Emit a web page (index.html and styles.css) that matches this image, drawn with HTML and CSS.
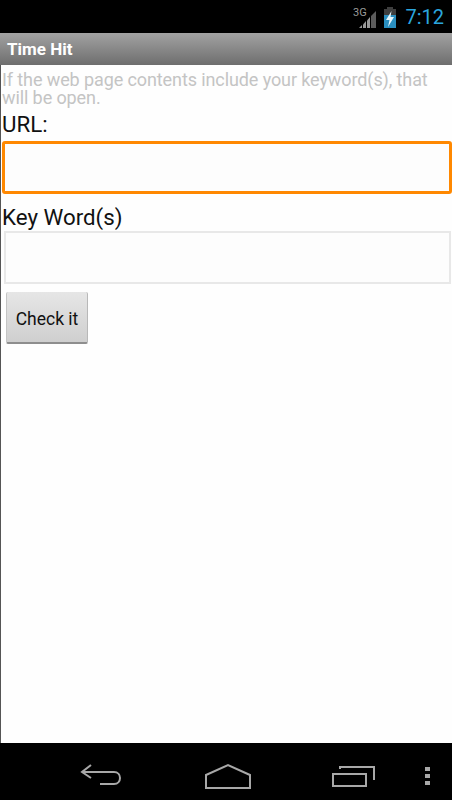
FILE: index.html
```html
<!DOCTYPE html>
<html lang="en">
<head>
<meta charset="UTF-8">
<title>Time Hit</title>
<link rel="stylesheet" href="styles.css">
</head>
<body>
<div class="status-bar">
  <svg class="signal" width="24" height="24" viewBox="0 0 24 24">
    <text x="0" y="11" class="net">3G</text>
    <path d="M6 23h3v-3H9z" fill="#9a9a9a"/>
    <path d="M10 23h3v-7l-3 3.500z" fill="#9a9a9a"/>
    <path d="M14 23h3V12l-3 3.500z" fill="#9a9a9a"/>
    <path d="M18 23h5V6l-5 5z" fill="#5c5c5c"/>
  </svg>
  <svg class="battery" width="14" height="24" viewBox="0 0 14 24">
    <path d="M4 2h6v2h3v7H1V4h3z" fill="#3f3f3f"/>
    <path d="M1 10h12v13H1z" fill="#2a8fc0"/>
    <path d="M8.500 6L3 15h3.500L5 22l6-10H7.500z" fill="#e6f6fc"/>
  </svg>
  <span class="clock">7:12</span>
</div>
<div class="title-bar">Time Hit</div>
<div class="content">
  <p class="hint">If the web page contents include your keyword(s), that will be open.</p>
  <label class="field-label url-label" for="url">URL:</label>
  <input class="url-input" type="text" id="url">
  <label class="field-label key-label" for="keys">Key Word(s)</label>
  <input class="key-input" type="text" id="keys">
  <button class="check-btn">Check it</button>
</div>
<div class="nav-bar">
  <svg class="nav-back" width="44" height="24" viewBox="0 0 44 24" fill="none" stroke="#a8a8a8" stroke-width="2">
    <path d="M11 2L2 9l9 6"/>
    <path d="M2 9h32c8 0 8 12 0 12H20"/>
  </svg>
  <svg class="nav-home" width="48" height="26" viewBox="0 0 48 26" fill="none" stroke="#a8a8a8" stroke-width="2">
    <path d="M2 12L24 2l22 10v13H2z"/>
  </svg>
  <svg class="nav-recent" width="44" height="24" viewBox="0 0 44 24" fill="none" stroke="#a8a8a8" stroke-width="2">
    <path d="M1 10h33v12H1z"/>
    <path d="M8 5V3h34v13"/>
  </svg>
  <div class="nav-menu"><i></i><i></i><i></i></div>
</div>
</body>
</html>
```

FILE: styles.css
```css
body {
  margin: 0;
  width: 452px;
  height: 800px;
  display: flex;
  flex-direction: column;
  overflow: hidden;
  font-family: Roboto, "Liberation Sans", sans-serif;
  background-color: #fefefe;
}

.status-bar {
  height: 33px;
  background-color: #000;
  display: flex;
  align-items: center;
  justify-content: flex-end;
  padding-right: 8px;
  flex-shrink: 0;
}
.signal {
  margin-right: 6px;
}
.net {
  font-size: 11px;
  fill: #9a9a9a;
}
.battery {
  margin-right: 8px;
}
.clock {
  font-size: 20px;
  color: #2ba6de;
}

.title-bar {
  height: 32px;
  line-height: 32px;
  padding-left: 7px;
  background: linear-gradient(#a2a2a2, #6e6e6e);
  color: #fff;
  font-size: 17px;
  font-weight: bold;
  flex-shrink: 0;
}

.content {
  flex: 1;
  display: flex;
  flex-direction: column;
  align-items: flex-start;
  border-left: 1px solid #555;
  padding-top: 6px;
}
.hint {
  margin: 0 0 0 1px;
  font-size: 18px;
  letter-spacing: -0.1px;
  line-height: 18px;
  color: #c4c4c4;
}
.field-label {
  margin-left: 1px;
  font-size: 22.300px;
  line-height: 26px;
  color: #111;
}
.url-label {
  margin-top: 4px;
}
.url-input {
  box-sizing: border-box;
  width: 450px;
  height: 53px;
  margin: 4px 0 0 1px;
  background-color: #fdfdfd;
  border: 3px solid #ff8800;
  border-radius: 3px;
  outline: none;
}
.key-label {
  margin-top: 10px;
}
.key-input {
  box-sizing: border-box;
  width: 447px;
  height: 53px;
  margin: 1px 0 0 3px;
  background-color: #fdfdfd;
  border: 2px solid #e8e8e8;
  border-radius: 0;
  outline: none;
}
.check-btn {
  width: 82px;
  height: 52px;
  margin: 8px 0 0 5px;
  padding: 3px 0 0;
  background: linear-gradient(#e6e6e6, #cfcfcf);
  border: none;
  border-bottom: 2px solid #8e8e8e;
  border-left: 1px solid #c4c4c4;
  border-right: 1px solid #b8b8b8;
  border-radius: 2px;
  font-family: Roboto, sans-serif;
  font-size: 17.500px;
  color: #111;
}

.nav-bar {
  height: 57px;
  background-color: #000;
  position: relative;
  flex-shrink: 0;
}
.nav-back,
.nav-home,
.nav-recent,
.nav-menu {
  position: absolute;
}
.nav-back {
  left: 80px;
  top: 20px;
}
.nav-home {
  left: 204px;
  top: 20px;
}
.nav-recent {
  left: 332px;
  top: 21px;
}
.nav-menu {
  left: 425px;
  top: 24px;
  display: flex;
  flex-direction: column;
  gap: 3px;
}
.nav-menu i {
  display: block;
  width: 5px;
  height: 4px;
  background-color: #a8a8a8;
}
```
